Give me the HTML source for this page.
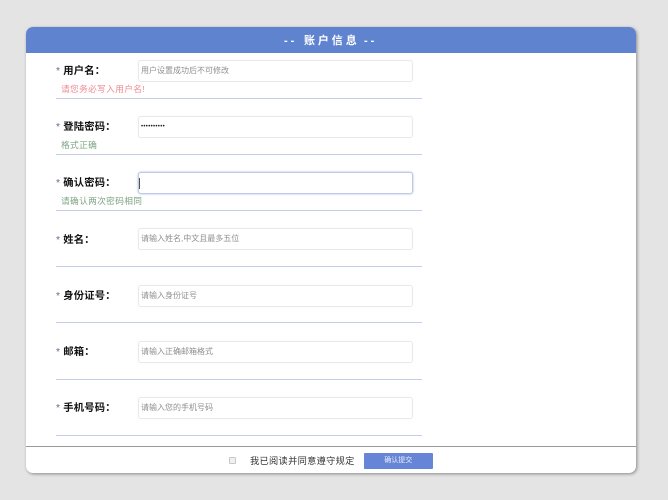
<!DOCTYPE html>
<html lang="zh">
<head>
<meta charset="utf-8">
<title>账户信息</title>
<style>
html,body{margin:0;padding:0;width:668px;height:500px;overflow:hidden;background:#e4e4e4;}
body{font-family:"Liberation Sans","Noto Sans CJK SC",sans-serif;position:relative;}
.card{position:absolute;left:26px;top:26.5px;width:610px;height:446.5px;background:#fff;border-radius:7px;box-shadow:1px 1px 3px rgba(0,0,0,.4);overflow:hidden;}
.blur{position:absolute;left:0;top:0;width:610px;height:447px;filter:blur(.35px);}
.head{position:absolute;left:0;top:0;width:610px;height:26.5px;background:#6083d0;}
.head span{position:absolute;top:0;color:#fff;font-size:11px;font-weight:bold;letter-spacing:2.9px;line-height:28px;white-space:pre;}
.lab{position:absolute;left:30px;font-size:10.3px;font-weight:bold;color:#111;line-height:14px;white-space:pre;letter-spacing:.2px;}
.lab i{font-style:normal;font-weight:normal;color:#5b6f9a;margin-right:3px;}
.inp{position:absolute;left:112px;width:271px;height:20px;border:1px solid #e9e9e9;border-radius:3px;background:#fff;font-size:8px;line-height:20px;color:#8f8f8f;padding-left:2px;box-sizing:content-box;white-space:pre;box-shadow:0 0 1px #eee;}
.msg{position:absolute;left:35px;font-size:8.7px;letter-spacing:.35px;line-height:12px;white-space:pre;}
.red{color:#ee8a92;}
.grn{color:#7ea583;}
.line{position:absolute;left:30px;width:366px;height:1.4px;background:#c2cde6;}
.foot{position:absolute;left:0;top:419.5px;width:610px;height:1px;background:#9a9a9a;}
.chk{position:absolute;left:203px;top:430.5px;width:5px;height:5px;border:1px solid #c8c8c8;border-radius:1px;background:#f0f0f0;}
.agree{position:absolute;left:224px;top:427.5px;font-size:9.2px;letter-spacing:.33px;line-height:14px;color:#333;white-space:pre;}
.btn{position:absolute;left:338px;top:426.5px;width:68.5px;height:15.5px;background:#6685d6;border-radius:1px;color:#e8edfa;font-size:7px;line-height:16px;text-align:center;}
</style>
</head>
<body>
<div class="card"><div class="blur">
  <div class="head"><span style="left:258px">--</span><span style="left:278px">账户信息</span><span style="left:338px">--</span></div>

  <div class="lab" style="top:38px"><i>*</i>用户名：</div>
  <div class="inp" style="top:33.5px">用户设置成功后不可修改</div>
  <div class="msg red" style="top:56.5px">请您务必写入用户名!</div>
  <div class="line" style="top:71px"></div>

  <div class="lab" style="top:94.5px"><i>*</i>登陆密码：</div>
  <div class="inp" style="top:89.5px;color:#222;font-size:6px;letter-spacing:.3px;">••••••••••</div>
  <div class="msg grn" style="top:112.5px">格式正确</div>
  <div class="line" style="top:127px"></div>

  <div class="lab" style="top:150.5px"><i>*</i>确认密码：</div>
  <div class="inp" style="top:145.5px;border-color:#c0cae6;box-shadow:0 0 2px #a9b8dc;"><span style="display:block;position:absolute;left:0;top:5px;width:1px;height:11px;background:#555"></span></div>
  <div class="msg grn" style="top:168.5px">请确认两次密码相同</div>
  <div class="line" style="top:183.5px"></div>

  <div class="lab" style="top:207px"><i>*</i>姓名：</div>
  <div class="inp" style="top:201.5px">请输入姓名,中文且最多五位</div>
  <div class="line" style="top:239.5px"></div>

  <div class="lab" style="top:263px"><i>*</i>身份证号：</div>
  <div class="inp" style="top:258px">请输入身份证号</div>
  <div class="line" style="top:295.5px"></div>

  <div class="lab" style="top:319px"><i>*</i>邮箱：</div>
  <div class="inp" style="top:314.5px">请输入正确邮箱格式</div>
  <div class="line" style="top:352px"></div>

  <div class="lab" style="top:375.5px"><i>*</i>手机号码：</div>
  <div class="inp" style="top:370.5px">请输入您的手机号码</div>
  <div class="line" style="top:408px"></div>

  <div class="foot"></div>
  <div class="chk"></div>
  <div class="agree">我已阅读并同意遵守规定</div>
  <div class="btn">确认提交</div>
</div></div>
</body>
</html>
